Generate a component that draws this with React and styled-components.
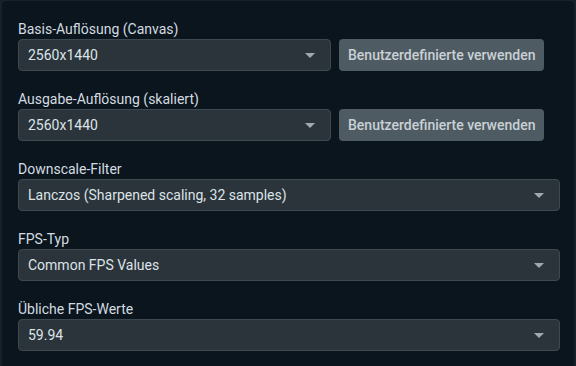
import React from "react";
import styled, { createGlobalStyle } from "styled-components";

const Global = createGlobalStyle`
  html, body {
    margin: 0;
    padding: 0;
    background: #172129;
    height: 100%;
  }
  #root {
    height: 100%;
  }
  * {
    box-sizing: border-box;
  }
`;

const Panel = styled.div`
  margin: 1px 2px 0 2px;
  height: calc(100vh - 1px);
  background: #0b151d;
  border-radius: 4px 4px 0 0;
  padding: 18px 14px 0 16px;
  font-family: Roboto, "Liberation Sans", sans-serif;
  display: flex;
  flex-direction: column;
  gap: 18px;
`;

const Group = styled.div`
  display: flex;
  flex-direction: column;
`;

const Label = styled.div`
  font-size: 14px;
  line-height: 20px;
  height: 20px;
  color: #d3dbe0;
`;

const Row = styled.div`
  display: flex;
  gap: 8px;
  align-items: stretch;
`;

const Select = styled.div`
  height: 32px;
  width: ${({ $wide }) => ($wide ? "542px" : "313px")};
  background: #2b343b;
  border: 1px solid #3e484f;
  border-radius: 4px;
  display: flex;
  align-items: center;
  justify-content: space-between;
  padding: 0 15px 0 9px;
  font-size: 14px;
  color: #dce3e7;
`;

const Arrow = styled.span`
  width: 0;
  height: 0;
  border-left: 5px solid transparent;
  border-right: 5px solid transparent;
  border-top: 5px solid #a1a9ae;
  margin-top: 1px;
`;

const Button = styled.div`
  height: 32px;
  padding: 0 9px;
  background: #4f5b62;
  border-radius: 4px;
  display: flex;
  align-items: center;
  font-size: 14px;
  font-weight: 500;
  color: #c9d1d6;
`;

const fields = [
  { label: "Basis-Auflösung (Canvas)", value: "2560x1440", custom: true },
  { label: "Ausgabe-Auflösung (skaliert)", value: "2560x1440", custom: true },
  { label: "Downscale-Filter", value: "Lanczos (Sharpened scaling, 32 samples)" },
  { label: "FPS-Typ", value: "Common FPS Values" },
  { label: "Übliche FPS-Werte", value: "59.94" },
];

export default function App() {
  return (
    <>
      <Global />
      <Panel>
        {fields.map((f) => (
          <Group key={f.label}>
            <Label>{f.label}</Label>
            <Row>
              <Select $wide={!f.custom}>
                <span>{f.value}</span>
                <Arrow />
              </Select>
              {f.custom && <Button>Benutzerdefinierte verwenden</Button>}
            </Row>
          </Group>
        ))}
      </Panel>
    </>
  );
}
